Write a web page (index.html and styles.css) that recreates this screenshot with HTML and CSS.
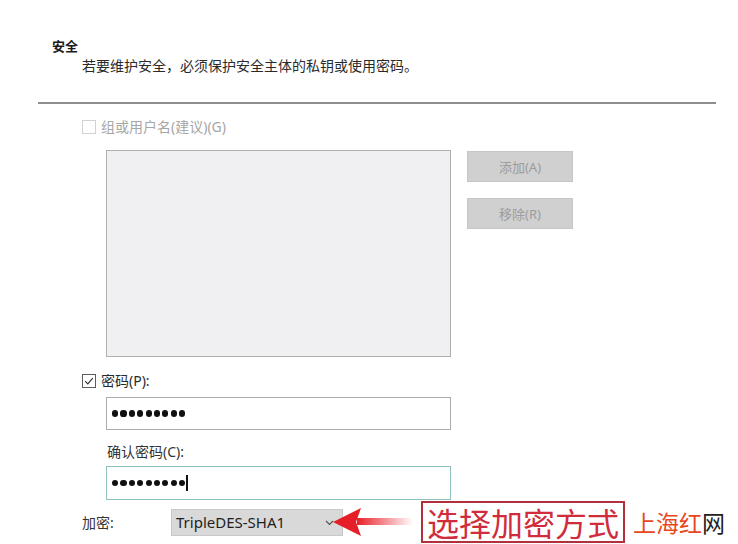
FILE: index.html
```html
<!DOCTYPE html>
<html lang="zh-CN">
  <head>
    <meta charset="UTF-8" />
    <meta name="viewport" content="width=device-width, initial-scale=1.0" />
    <title>安全</title>
    <link rel="stylesheet" href="styles.css">
  </head>
  <body>
    <div class="dialog">
      <div class="intro">
        <h1 class="intro-title">安全</h1>
        <p class="intro-text">若要维护安全，必须保护安全主体的私钥或使用密码。</p>
      </div>
      <hr class="divider" />

      <div class="form">
        <label class="check check-disabled">
          <span class="box"></span>
          组或用户名(建议)(G)
        </label>

        <div class="users">
          <div class="user-list"></div>
          <div class="user-actions">
            <button class="btn" disabled>添加(A)</button>
            <button class="btn" disabled>移除(R)</button>
          </div>
        </div>
        <!-- .users -->

        <label class="check check-on">
          <span class="box">
            <svg width="12" height="12" viewBox="0 0 12 12">
              <path d="M2.2 6.2 L4.8 8.8 L9.8 3.2" fill="none" stroke="#333" stroke-width="1.2" />
            </svg>
          </span>
          密码(P):
        </label>
        <div class="field">
          <span class="dot"></span><span class="dot"></span><span class="dot"></span>
          <span class="dot"></span><span class="dot"></span><span class="dot"></span>
          <span class="dot"></span><span class="dot"></span><span class="dot"></span>
        </div>

        <div class="field-label">确认密码(C):</div>
        <div class="field field-focus">
          <span class="dot"></span><span class="dot"></span><span class="dot"></span>
          <span class="dot"></span><span class="dot"></span><span class="dot"></span>
          <span class="dot"></span><span class="dot"></span><span class="dot"></span>
          <span class="caret"></span>
        </div>

        <div class="cipher">
          <span class="cipher-label">加密:</span>
          <div class="select">
            <span>TripleDES-SHA1</span>
            <svg class="chevron" width="9" height="6" viewBox="0 0 9 6">
              <path d="M1 1 L4.5 4.5 L8 1" fill="none" stroke="#555" stroke-width="1.2" />
            </svg>
          </div>
          <svg class="arrow" width="82" height="30" viewBox="0 0 82 30">
            <defs>
              <linearGradient id="tail" x1="0" y1="0" x2="1" y2="0">
                <stop offset="0" stop-color="#e8202a" />
                <stop offset="1" stop-color="#e8202a" stop-opacity="0" />
              </linearGradient>
            </defs>
            <rect x="24" y="11" width="56" height="7" fill="url(#tail)" />
            <polygon points="0,15 28,1 23,15 28,29" fill="#e61e28" />
          </svg>
          <div class="callout">选择加密方式</div>
          <div class="brand"><span class="brand-red">上海红</span>网</div>
        </div>
        <!-- .cipher -->
      </div>
      <!-- .form -->
    </div>
    <!-- .dialog -->
  </body>
</html>
```

FILE: styles.css
```css
*,
*::before,
*::after {
  box-sizing: border-box;
  padding: 0;
  margin: 0;
}

body {
  width: 738px;
  height: 544px;
  overflow: hidden;
  background-color: #fff;
  font-family: 'Noto Sans', 'Noto Sans CJK SC', sans-serif;
  color: #222;
}

.dialog {
  padding-top: 38px;
}

.intro {
  padding-left: 52px;
}

.intro-title {
  font-size: 13px;
  line-height: 16px;
  font-weight: bold;
  color: #1a1a1a;
}

.intro-text {
  margin: 3px 0 0 30px;
  font-size: 14px;
  line-height: 18px;
  color: #2a2a2a;
}

.divider {
  margin: 27px 22px 0 38px;
  height: 2px;
  border: none;
  background-color: #8e8e8e;
}

.form {
  padding: 15px 0 0 82px;
}

.check {
  display: flex;
  align-items: center;
  gap: 5px;
  height: 16px;
  font-size: 14px;
  line-height: 16px;
}

.check .box {
  width: 14px;
  height: 14px;
  display: flex;
  align-items: center;
  justify-content: center;
  border: 1px solid #5c5c5c;
  background-color: #fff;
}

.check-disabled {
  color: #a6a6a6;
}

.check-disabled .box {
  border-color: #d2d2d2;
}

.check-on {
  margin-top: 16px;
  color: #2a2a2a;
}

.users {
  display: flex;
  align-items: flex-start;
  gap: 16px;
  margin: 15px 0 0 24px;
}

.user-list {
  width: 345px;
  height: 207px;
  background-color: #f0f0f2;
  border: 1px solid #b0b0b0;
}

.user-actions {
  display: flex;
  flex-direction: column;
  gap: 16px;
  padding-top: 1px;
}

.btn {
  width: 106px;
  height: 31px;
  background-color: #d0d0d0;
  border: 1px solid #c6c6c6;
  color: #9c9c9c;
  font-family: 'Noto Sans', 'Noto Sans CJK SC', sans-serif;
  font-size: 13px;
}

.field {
  display: flex;
  align-items: center;
  gap: 2.2px;
  width: 345px;
  height: 33px;
  margin: 8px 0 0 24px;
  padding-left: 5px;
  border: 1px solid #ababab;
  background-color: #fff;
}

.field-focus {
  height: 34px;
  margin-top: 6px;
  border-color: #8fc2bd;
}

.dot {
  width: 6.2px;
  height: 6.2px;
  border-radius: 50%;
  background-color: #111;
}

.caret {
  width: 2px;
  height: 16px;
  margin-left: -1px;
  background-color: #111;
}

.field-label {
  margin: 14px 0 0 25px;
  font-size: 14px;
  line-height: 16px;
  color: #333;
}

.cipher {
  display: flex;
  align-items: center;
  height: 42px;
  margin-top: 1px;
}

.cipher-label {
  width: 89px;
  font-size: 14px;
  color: #333;
}

.select {
  display: flex;
  align-items: center;
  justify-content: space-between;
  width: 172px;
  height: 27px;
  padding: 0 8px 0 4px;
  background-color: #d9d9d9;
  border: 1px solid #c8c8c8;
  font-size: 15px;
  color: #1e1e1e;
}

.chevron {
  margin-top: 2px;
}

.arrow {
  margin-left: -10px;
  flex-shrink: 0;
}

.callout {
  margin-left: 6px;
  padding: 0 4px;
  height: 42px;
  border: 2px solid #b2303e;
  font-family: 'Noto Sans CJK SC', sans-serif;
  font-size: 32px;
  line-height: 38px;
  color: #d02c3c;
  white-space: nowrap;
}

.brand {
  margin-left: 8px;
  font-family: 'Noto Sans CJK SC', sans-serif;
  font-size: 23px;
  color: #222;
  white-space: nowrap;
}

.brand-red {
  color: #e8471e;
}
```
